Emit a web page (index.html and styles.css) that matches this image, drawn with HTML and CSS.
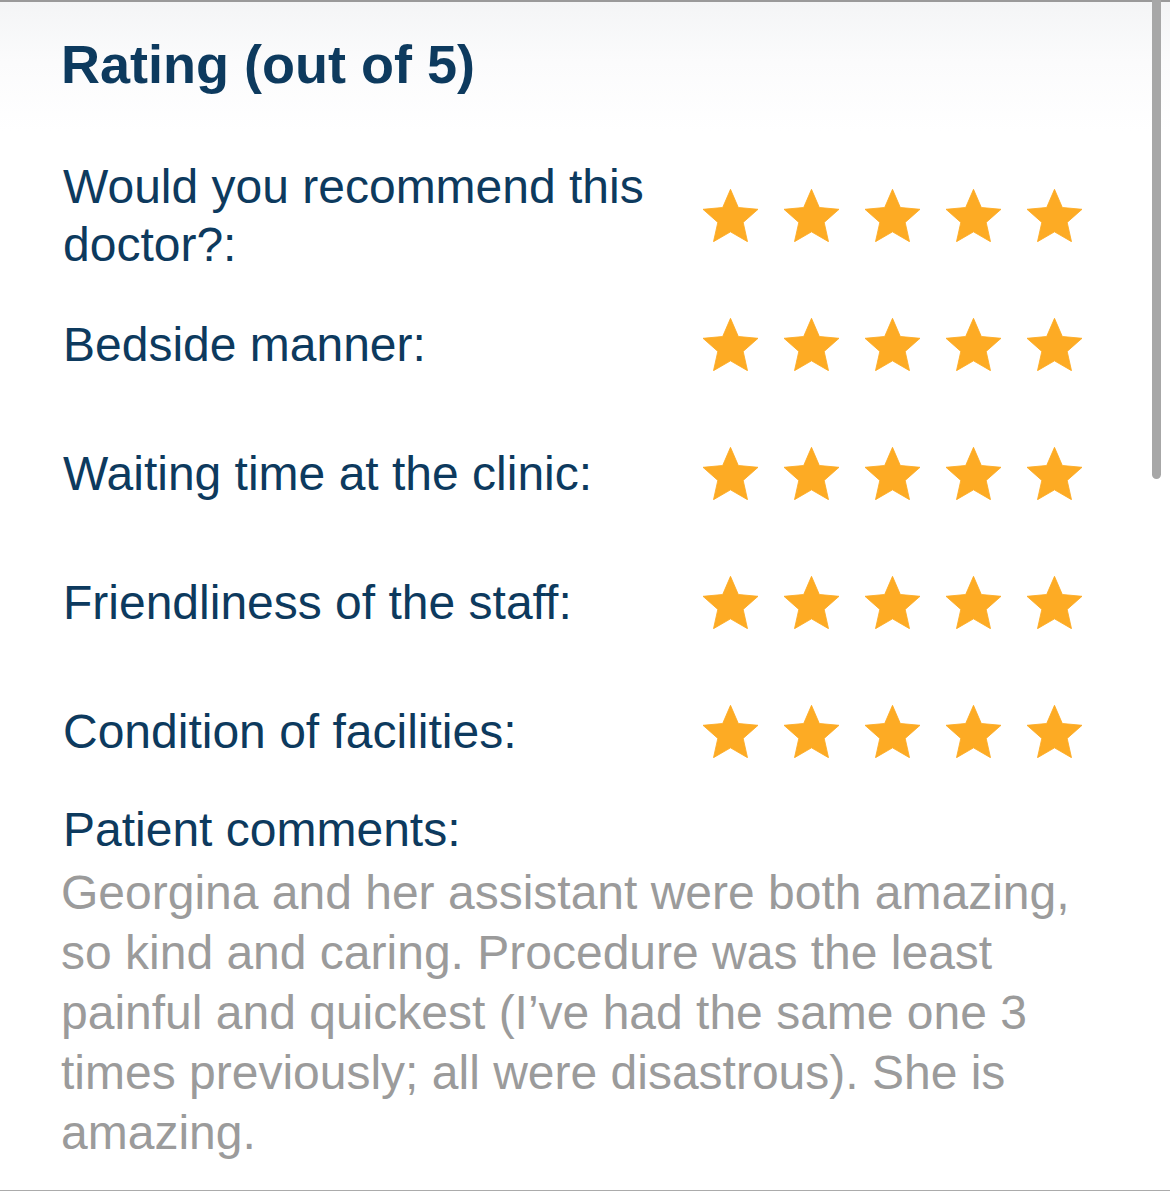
FILE: index.html
```html
<!DOCTYPE html>
<html>
	<head>
		<meta charset="UTF-8">
		<title>Rating</title>
		<link rel="stylesheet" href="styles.css">
	</head>
	<body>
		<svg class="defs" width="0" height="0">
			<symbol id="star" viewBox="0 0 95.1 90.45">
				<polygon points="47.55,0 61.08,31.38 95.1,34.55 69.47,57.12 76.94,90.45 47.55,73.5 18.16,90.45 25.63,57.12 0,34.55 34.02,31.38"/>
			</symbol>
		</svg>
		<div id="card">
			<h2 class="title">Rating (out of 5)</h2>
			<ul id="ratings">
				<li>
					<span class="label">Would you recommend this doctor?:</span>
					<span class="stars">
						<svg><use href="#star"/></svg><svg><use href="#star"/></svg><svg><use href="#star"/></svg><svg><use href="#star"/></svg><svg><use href="#star"/></svg>
					</span>
				</li>
				<li>
					<span class="label">Bedside manner:</span>
					<span class="stars">
						<svg><use href="#star"/></svg><svg><use href="#star"/></svg><svg><use href="#star"/></svg><svg><use href="#star"/></svg><svg><use href="#star"/></svg>
					</span>
				</li>
				<li>
					<span class="label">Waiting time at the clinic:</span>
					<span class="stars">
						<svg><use href="#star"/></svg><svg><use href="#star"/></svg><svg><use href="#star"/></svg><svg><use href="#star"/></svg><svg><use href="#star"/></svg>
					</span>
				</li>
				<li>
					<span class="label">Friendliness of the staff:</span>
					<span class="stars">
						<svg><use href="#star"/></svg><svg><use href="#star"/></svg><svg><use href="#star"/></svg><svg><use href="#star"/></svg><svg><use href="#star"/></svg>
					</span>
				</li>
				<li>
					<span class="label">Condition of facilities:</span>
					<span class="stars">
						<svg><use href="#star"/></svg><svg><use href="#star"/></svg><svg><use href="#star"/></svg><svg><use href="#star"/></svg><svg><use href="#star"/></svg>
					</span>
				</li>
			</ul>
			<h3 class="subtitle">Patient comments:</h3>
			<p class="comment">Georgina and her assistant were both amazing, so kind and caring. Procedure was the least painful and quickest (I’ve had the same one 3 times previously; all were disastrous). She is amazing.</p>
			<div class="scrollbar"></div>
		</div>
	</body>
</html>
```

FILE: styles.css
```css
html,body{
	margin: 0;
	padding: 0;
	background: #fff;
}
.defs{
	position: absolute;
	width: 0;
	height: 0;
}
ul,li{
	margin: 0;
	padding: 0;
	list-style: none;
}
h2,h3,p{
	margin: 0;
}
#card{
	position: relative;
	width: 1170px;
	height: 1191px;
	box-sizing: border-box;
	border-top: 2px solid #9a9a9a;
	border-bottom: 1px solid #ababab;
	padding: 31px 88px 0 63px;
	font-family: "Liberation Sans", Arial, sans-serif;
	color: #0d3a5e;
	background: linear-gradient(to bottom, #f4f5f6 0, #fbfbfc 60px, #fff 130px);
}
.title{
	font-size: 54px;
	line-height: 62px;
	font-weight: bold;
	margin: 0 0 56px -2px;
}
#ratings li{
	display: flex;
	align-items: center;
	justify-content: space-between;
	height: 129px;
}
#ratings .label{
	width: 600px;
	font-size: 48px;
	line-height: 58px;
}
.stars{
	display: flex;
	gap: 26px;
}
.stars svg{
	width: 55px;
	height: 53px;
	fill: #fdab24;
	stroke: #fdab24;
	stroke-width: 1.5;
	stroke-linejoin: round;
}
.subtitle{
	font-size: 48px;
	line-height: 60px;
	font-weight: normal;
	margin: 4px 0 3px;
}
.comment{
	font-size: 48px;
	line-height: 60px;
	color: #9b9b9b;
	margin-left: -2px;
}
.scrollbar{
	position: absolute;
	top: -2px;
	right: 9px;
	width: 9px;
	height: 479px;
	border-radius: 0 0 5px 5px;
	background: #a7a7a7;
}
```
